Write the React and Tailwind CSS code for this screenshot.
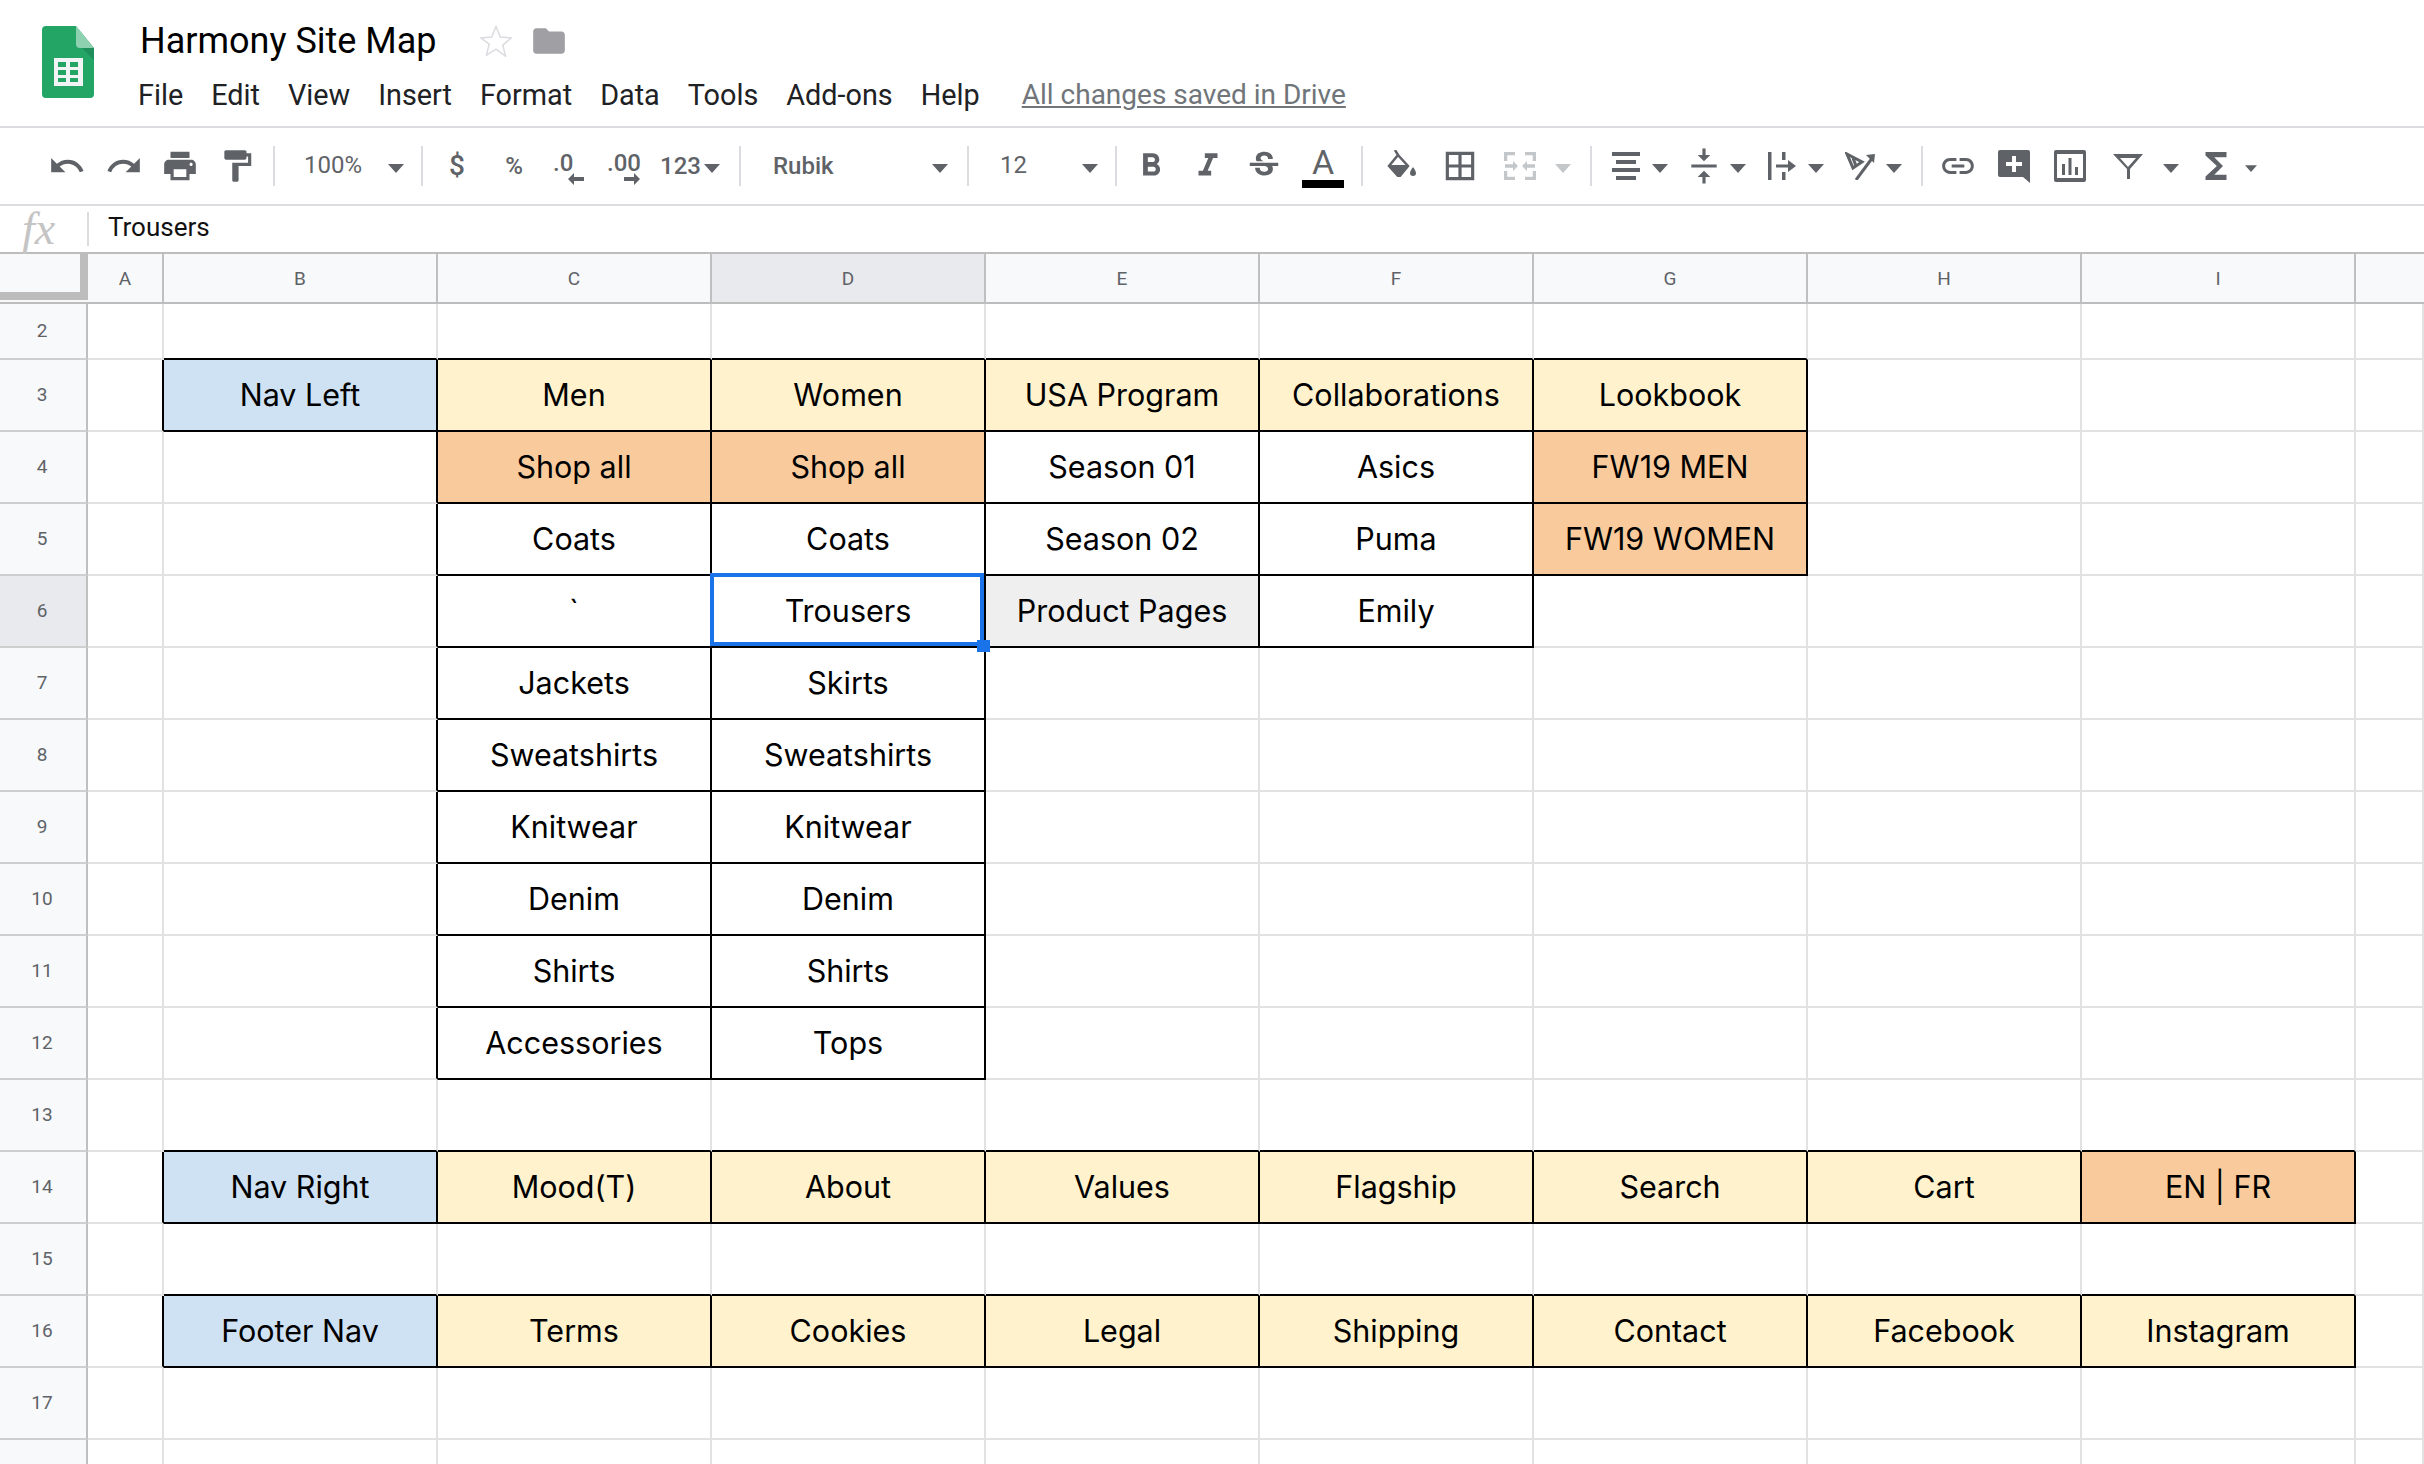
import {
  MdUndo,
  MdRedo,
  MdPrint,
  MdFormatPaint,
  MdFormatBold,
  MdFormatItalic,
  MdStrikethroughS,
  MdBorderAll,
  MdVerticalAlignCenter,
  MdLink,
  MdFunctions,
  MdFolder,
} from "react-icons/md";

const Y = "bg-[#fff2cc]";
const O = "bg-[#f9cb9c]";
const L = "bg-[#cfe2f3] text-[#073763]";
const G = "bg-[#efefef]";
const W = "bg-white";

const columns = ["A", "B", "C", "D", "E", "F", "G", "H", "I", ""];

// cells keyed by column letter: [text, fill]
const rows = {
  2: {},
  3: { B: ["Nav Left", L], C: ["Men", Y], D: ["Women", Y], E: ["USA Program", Y], F: ["Collaborations", Y], G: ["Lookbook", Y] },
  4: { C: ["Shop all", O], D: ["Shop all", O], E: ["Season 01", W], F: ["Asics", W], G: ["FW19 MEN", O] },
  5: { C: ["Coats", W], D: ["Coats", W], E: ["Season 02", W], F: ["Puma", W], G: ["FW19 WOMEN", O] },
  6: { C: ["`", W], D: ["Trousers", W], E: ["Product Pages", G], F: ["Emily", W] },
  7: { C: ["Jackets", W], D: ["Skirts", W] },
  8: { C: ["Sweatshirts", W], D: ["Sweatshirts", W] },
  9: { C: ["Knitwear", W], D: ["Knitwear", W] },
  10: { C: ["Denim", W], D: ["Denim", W] },
  11: { C: ["Shirts", W], D: ["Shirts", W] },
  12: { C: ["Accessories", W], D: ["Tops", W] },
  13: {},
  14: { B: ["Nav Right", L], C: ["Mood(T)", Y], D: ["About", Y], E: ["Values", Y], F: ["Flagship", Y], G: ["Search", Y], H: ["Cart", Y], I: ["EN | FR", O] },
  15: {},
  16: { B: ["Footer Nav", L], C: ["Terms", Y], D: ["Cookies", Y], E: ["Legal", Y], F: ["Shipping", Y], G: ["Contact", Y], H: ["Facebook", Y], I: ["Instagram", Y] },
  17: {},
  18: {},
};

const hasCell = (row, col) => Boolean(rows[row] && rows[row][col]);

function Caret({ className = "", light = false, small = false }) {
  return (
    <svg viewBox="0 0 16 9" className={`${small ? "w-[12px] h-[7px]" : "w-[16px] h-[9px]"} mt-1 shrink-0 ${className}`}>
      <path d="M0 0h16L8 9z" fill={light ? "#c4c7c9" : "#5f6368"} />
    </svg>
  );
}

function Sep({ className = "" }) {
  return <div className={`w-[2px] h-[40px] bg-[#dadce0] shrink-0 ${className}`} />;
}

function SheetsLogo() {
  return (
    <svg viewBox="0 0 52 72" className="w-[52px] h-[72px] ml-[42px] mt-[26px] shrink-0">
      <path d="M4 0h30l18 22v46a4 4 0 0 1-4 4H4a4 4 0 0 1-4-4V4a4 4 0 0 1 4-4z" fill="#23a566" />
      <path d="M34 16l18 18V22z" fill="#1e8e5a" />
      <path d="M34 0l18 22H38a4 4 0 0 1-4-4z" fill="#8ed1b1" />
      <path d="M12 32h29v28H12z" fill="#f1f3f4" />
      <path d="M16 36h8v5h-8zM28 36h8v5h-8zM16 44h8v5h-8zM28 44h8v5h-8zM16 52h8v4h-8zM28 52h8v4h-8z" fill="#23a566" />
    </svg>
  );
}

function Toolbar() {
  const icon = "text-[38px] text-[#5f6368] shrink-0";
  const label = "text-[#5f6368] font-['Roboto',sans-serif] text-[24px] leading-none shrink-0";
  return (
    <div className="h-[78px] flex items-center border-b-2 border-[#dadce0] pl-[48px]">
      <MdUndo className={icon} />
      <MdRedo className={`${icon} ml-[19px]`} />
      <MdPrint className={`${icon} ml-[18px]`} />
      <MdFormatPaint className={`${icon} ml-[19px]`} />
      <Sep className="ml-[17px]" />
      <span className={`${label} ml-[29px] w-[84px] -mt-[2px]`}>100%</span>
      <Caret />
      <Sep className="ml-[17px]" />
      <span className={`${label} ml-[19px] w-[30px] text-center font-medium !text-[28px]`}>$</span>
      <span className={`${label} ml-[27px] w-[30px] text-center font-medium`}>%</span>
      <span className={`${label} ml-[24px] w-[20px] relative font-medium -mt-[6px]`}>
        .0
        <svg viewBox="0 0 16 12" className="absolute left-[15px] top-[22px] w-[16px] h-[12px]">
          <path d="M16 4H6V0L0 6l6 6V8h10z" fill="#5f6368" />
        </svg>
      </span>
      <span className={`${label} ml-[34px] w-[33px] relative font-medium -mt-[6px]`}>
        .00
        <svg viewBox="0 0 16 12" className="absolute left-[17px] top-[22px] w-[16px] h-[12px]">
          <path d="M0 4h10V0l6 6-6 6V8H0z" fill="#5f6368" />
        </svg>
      </span>
      <span className={`${label} ml-[20px] w-[40px] font-medium`}>123</span>
      <Caret className="ml-[4px]" />
      <Sep className="ml-[19px]" />
      <span className={`${label} ml-[32px] w-[159px] font-medium`}>Rubik</span>
      <Caret />
      <Sep className="ml-[19px]" />
      <span className={`${label} ml-[31px] w-[82px] -mt-[2px]`}>12</span>
      <Caret />
      <Sep className="ml-[17px]" />
      <MdFormatBold className={`${icon} ml-[15px]`} />
      <MdFormatItalic className={`${icon} ml-[19px]`} />
      <MdStrikethroughS className={`${icon} ml-[18px]`} />
      <div className="ml-[19px] w-[42px] flex flex-col items-center shrink-0 mt-[2px]">
        <span className="text-[#5f6368] font-['Roboto',sans-serif] text-[34px] leading-[30px]">A</span>
        <div className="w-[42px] h-[8px] bg-black mt-[3px]" />
      </div>
      <Sep className="ml-[17px]" />
      <svg viewBox="0 0 30 27" className="w-[30px] h-[27px] ml-[23px] -mt-[6px] shrink-0">
        <path d="M9 0l3 5 10 11-9 11L3 16l9-11" fill="none" stroke="#5f6368" strokeWidth="2.5" />
        <path d="M3 15h19l-9 12z" fill="#5f6368" />
        <path d="M27 17s-3 4-3 6a3 3 0 0 0 6 0c0-2-3-6-3-6z" fill="#5f6368" />
      </svg>
      <MdBorderAll className={`${icon} ml-[25px]`} />
      <svg viewBox="0 0 32 28" className="w-[32px] h-[28px] ml-[25px] shrink-0" fill="none" stroke="#c4c7c9" strokeWidth="3.5">
        <path d="M1.5 9V1.5H11M21 1.5h9.5V9M1.5 19v7.5H11M21 26.5h9.5V19" />
        <path d="M1 14h9M31 14h-9" />
        <path d="M9 9l5 5-5 5zM23 9l-5 5 5 5z" fill="#c4c7c9" stroke="none" />
      </svg>
      <Caret light className="ml-[19px]" />
      <Sep className="ml-[19px]" />
      <svg viewBox="0 0 28 28" className="w-[28px] h-[28px] ml-[20px] shrink-0">
        <path d="M0 0h28v4H0zM4 8h20v4H4zM0 16h28v4H0zM4 24h20v4H4z" fill="#5f6368" />
      </svg>
      <Caret className="ml-[12px]" />
      <MdVerticalAlignCenter className={`${icon} ml-[17px]`} />
      <Caret className="ml-[7px]" />
      <svg viewBox="0 0 28 28" className="w-[28px] h-[28px] ml-[22px] shrink-0">
        <path d="M0 0h3.500v28H0zM14 0h3.500v8H14zM14 20h3.500v8H14zM8 12.500h12V8l8 6-8 6v-4.500H8z" fill="#5f6368" />
      </svg>
      <Caret className="ml-[12px]" />
      <svg viewBox="0 0 30 28" className="w-[30px] h-[28px] ml-[21px] shrink-0" fill="none" stroke="#5f6368" strokeWidth="3">
        <path d="M2 2l15 8-9 6zM11 14l-3-8" />
        <path d="M11 28L28 5" />
        <path d="M21 3l9-1-1 9z" fill="#5f6368" stroke="none" />
      </svg>
      <Caret className="ml-[11px]" />
      <Sep className="ml-[19px]" />
      <MdLink className={`${icon} ml-[16px]`} />
      <svg viewBox="0 0 32 33" className="w-[32px] h-[33px] ml-[21px] shrink-0">
        <path d="M2 0h28a2 2 0 0 1 2 2v31l-7-6H2a2 2 0 0 1-2-2V2a2 2 0 0 1 2-2z" fill="#5f6368" />
        <path d="M14 6h4v6h6v4h-6v6h-4v-6H8v-4h6z" fill="#fff" />
      </svg>
      <svg viewBox="0 0 32 32" className="w-[32px] h-[32px] ml-[24px] shrink-0">
        <rect width="32" height="32" rx="2" fill="#5f6368" />
        <rect x="3" y="4" width="26" height="24" fill="#fff" />
        <path d="M8 14h3v11H8zM14.500 8h3v17h-3zM21 17h3v8h-3z" fill="#5f6368" />
      </svg>
      <svg viewBox="0 0 30 25" className="w-[30px] h-[25px] ml-[27px] shrink-0">
        <path d="M0 0h30L17 15v10h-3V15zM7 4l8 9 8-9z" fill="#5f6368" fillRule="evenodd" />
      </svg>
      <Caret className="ml-[20px]" />
      <MdFunctions className="text-[42px] text-[#5f6368] shrink-0 ml-[16px]" />
      <Caret small className="ml-[8px]" />
    </div>
  );
}

function Cell({ row, col, index }) {
  const cell = rows[row][col];
  const next = columns[index + 1];
  const blackRight = col && (hasCell(row, col) || hasCell(row, next));
  const blackBottom = col && (hasCell(row, col) || hasCell(row + 1, col));
  const selected = row === 6 && col === "D";
  return (
    <div
      className={`relative flex items-center justify-center border-r-2 border-b-2 text-[30.5px] text-black ${
        blackRight ? "border-r-black" : "border-r-[#e2e2e2]"
      } ${blackBottom ? "border-b-black" : "border-b-[#e2e2e2]"} ${cell ? cell[1] : "bg-white"}`}
    >
      {cell ? cell[0] : ""}
      {selected && (
        <>
          <div className="absolute z-10 -left-[2px] -top-[3px] right-0 bottom-0 border-[4px] border-[#1a73e8]" />
          <div className="absolute z-10 -right-[6px] -bottom-[6px] w-[13px] h-[12px] bg-[#1a73e8]" />
        </>
      )}
    </div>
  );
}

function Sheet() {
  return (
    <div className="grid grid-cols-[88px_76px_repeat(8,274px)_68px] font-['Inter',sans-serif]">
      {/* column headers */}
      <div className="h-[50px] bg-[#f8f9fa] border-b-2 border-[#bdbdbd] relative">
        <div className="h-[46px] border-r-[8px] border-b-[8px] border-[#bdbdbd]" />
      </div>
      {columns.map((c) => (
        <div
          key={c}
          className={`h-[50px] pt-[2px] flex items-center justify-center border-b-2 border-b-[#bdbdbd] text-[19px] text-[#5f6368] font-['Roboto',sans-serif] ${
            c ? "border-r-2 border-r-[#c0c0c0]" : ""
          } ${c === "D" ? "bg-[#e8eaed]" : "bg-[#f8f9fa]"}`}
        >
          {c}
        </div>
      ))}

      {Object.keys(rows).map((key) => {
        const row = Number(key);
        const height = row === 2 ? "h-[56px]" : "h-[72px]";
        return (
          <div key={row} className="contents">
            <div
              className={`${height} flex items-center justify-center pr-[2px] border-r-2 border-b-2 border-r-[#c0c0c0] border-b-[#cfcfcf] text-[19px] text-[#5f6368] font-['Roboto',sans-serif] ${
                row === 6 ? "bg-[#e8eaed]" : "bg-[#f8f9fa]"
              }`}
            >
              {row === 18 ? "" : row}
            </div>
            {columns.map((c, i) => (
              <Cell key={c} row={row} col={c} index={i} />
            ))}
          </div>
        );
      })}
    </div>
  );
}

export default function App() {
  return (
    <div className="w-[2424px] h-[1464px] overflow-hidden bg-white">
      {/* title + menu bar */}
      <div className="h-[128px] flex border-b-2 border-[#dadce0]">
        <SheetsLogo />
        <div className="ml-[45px]">
          <div className="flex items-center h-[80px]">
            <span className="text-[36px] leading-none text-black font-['Roboto',sans-serif] ml-[1px] mt-[1px]">Harmony Site Map</span>
            <svg viewBox="0 0 32 32" className="w-[32px] h-[32px] ml-[43px] mt-[1px]">
              <path d="M16 1.500l4.300 10.600 11 .8-8.500 7.200 2.700 11L16 24.200 6.500 30.100l2.700-11L.7 12.900l11-.8z" fill="none" stroke="#dadce0" strokeWidth="1.500" />
            </svg>
            <MdFolder className="text-[38px] text-[#a0a0a4] ml-[18px] mt-[1px]" />
          </div>
          <div className="flex items-center gap-[28px] -ml-[1px] text-[28.8px] leading-none text-[#202124] font-['Roboto',sans-serif] mt-[1px]">
            <span>File</span>
            <span>Edit</span>
            <span>View</span>
            <span>Insert</span>
            <span>Format</span>
            <span>Data</span>
            <span>Tools</span>
            <span>Add-ons</span>
            <span>Help</span>
            <span className="underline ml-[14px] text-[28px] text-[#70757a]">All changes saved in Drive</span>
          </div>
        </div>
      </div>

      <Toolbar />

      {/* formula bar */}
      <div className="h-[46px] flex items-center">
        <span className="w-[87px] pl-[22px] font-['Liberation_Serif',serif] italic text-[46px] text-[#c4c4c4] leading-none">fx</span>
        <div className="w-[2px] h-[34px] bg-[#dadce0]" />
        <span className="ml-[19px] -mt-[3px] text-[26px] text-[#111] font-['Roboto',sans-serif]">Trousers</span>
      </div>

      <div className="border-t-2 border-[#bdbdbd]">
        <Sheet />
      </div>
    </div>
  );
}
